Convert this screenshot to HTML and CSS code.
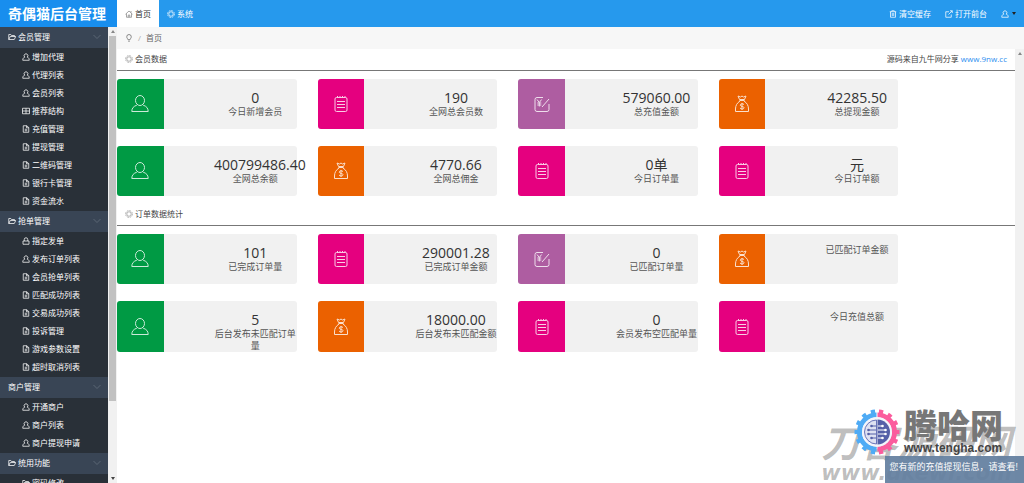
FILE: index.html
```html
<!DOCTYPE html>
<html lang="zh-CN">
<head>
<meta charset="utf-8">
<title>奇偶猫后台管理</title>
<link rel="stylesheet" href="styles.css">
</head>
<body>
<svg class="sprite" aria-hidden="true">
  <symbol id="user" viewBox="0 0 16 16"><path d="M5.500 8.300a3.800 3.800 0 1 1 5 0M5.500 8.300C3 8.800 1.500 11 1.500 14.500h13c0-3.500-1.500-5.700-4-6.200"/></symbol>
  <symbol id="folder" viewBox="0 0 16 16"><path d="M1.500 13V3h4l1.500 2h6v2M1.500 13l3-6h11l-3 6z"/></symbol>
  <symbol id="file" viewBox="0 0 16 16"><path d="M2.500 1.500h7L13.500 5v9.500h-11zM9 1.500V5.500h4.500M5.500 8.500h5M5.500 11.500h5"/></symbol>
  <symbol id="table" viewBox="0 0 16 16"><path d="M1 2.500h14v11H1zM8 2.500v11M1 8h14"/></symbol>
  <symbol id="lock" viewBox="0 0 16 16"><path d="M2 8h12v6.500H2zM4.500 8V5a3.500 3.500 0 0 1 7 0v3"/></symbol>
  <symbol id="ring" viewBox="0 0 16 16"><circle cx="8" cy="8" r="6.800" stroke-dasharray="3.500 1.800"/><circle cx="8" cy="8" r="4.500"/></symbol>
  <symbol id="home" viewBox="0 0 16 16"><path d="M1 8.500 8 2l7 6.500M3 7v7.500h10V7M6.500 14.500V10h3v4.500M12 5V2"/></symbol>
  <symbol id="pin" viewBox="0 0 16 16"><path d="M6 11.500C5.500 9 3.500 8.500 3.500 5.500a4.500 4.500 0 0 1 9 0c0 3-2 3.500-2.500 6zM6.500 14.500h3"/></symbol>
  <symbol id="trash" viewBox="0 0 16 16"><path d="M1.500 3.500h13M5.500 3.500v-2h5v2M3 3.500v11h10v-11M6.500 6v6M9.500 6v6"/></symbol>
  <symbol id="open" viewBox="0 0 16 16"><path d="M8 3.500H1.500v11h11V9M10 1.500h4.500V6M14.500 1.500 7 9"/></symbol>
  <symbol id="chevron" viewBox="0 0 16 16"><path d="m1 4 7 7 7-7"/></symbol>
  <symbol id="member" viewBox="0 0 18 18"><ellipse cx="9" cy="5.500" rx="4.500" ry="5"/><path d="M5.800 10.200C2.500 11.200.8 13.300.8 16.500h16.400c0-3.200-1.700-5.300-5-6.300"/></symbol>
  <symbol id="list" viewBox="0 0 18 18"><rect x="3" y="2.500" width="12" height="14" rx="1.500"/><path d="M5 6.500h8M5 9.500h8M5 12.500h8M5.500 1v2M8 1v2M10.500 1v2M13 1v2"/></symbol>
  <symbol id="recharge" viewBox="0 0 18 18"><path d="M10 2.500H4A2 2 0 0 0 2 4.500v10a2 2 0 0 0 2 2h10a2 2 0 0 0 2-2V9M16 4l-7 8M4 4.500l2.300 3 2.300-3M6.300 7.500v4M4.300 8h4M4.300 10h4"/></symbol>
  <symbol id="bag" viewBox="0 0 18 18"><path d="M6.500 4.500 5 1l2.500 1L9 1l1.500 1L13 1l-1.500 3.500zM6.500 5.500h5M7 6C4 8 2.500 10.500 2.500 14v2.500h13V14C15.500 10.500 14 8 11 6M11 9.500c-1-1.200-4-.8-3.700.8.3 1.500 3.700.7 3.700 2.400s-3 1.600-4 .3M9 8v7"/></symbol>
</svg>

<header class="topbar">
  <h1 class="brand">奇偶猫后台管理</h1>
  <nav class="tabs">
    <a class="tab active" href="#"><svg class="icon"><use href="#home"/></svg>首页</a>
    <a class="tab" href="#"><svg class="icon"><use href="#ring"/></svg>系统</a>
  </nav>
  <div class="tools">
    <a href="#"><svg class="icon"><use href="#trash"/></svg>清空缓存</a>
    <a href="#"><svg class="icon"><use href="#open"/></svg>打开前台</a>
    <button class="account" aria-label="账户"><svg class="icon"><use href="#user"/></svg><span class="caret"></span></button>
  </div>
</header>

<div class="body">
  <aside class="sidebar">
    <h2 class="group"><svg class="icon"><use href="#folder"/></svg>会员管理<svg class="icon fold"><use href="#chevron"/></svg></h2>
    <ul class="menu">
      <li><a href="#"><svg class="icon"><use href="#user"/></svg>增加代理</a></li>
      <li><a href="#"><svg class="icon"><use href="#user"/></svg>代理列表</a></li>
      <li><a href="#"><svg class="icon"><use href="#user"/></svg>会员列表</a></li>
      <li><a href="#"><svg class="icon"><use href="#table"/></svg>推荐结构</a></li>
      <li><a href="#"><svg class="icon"><use href="#file"/></svg>充值管理</a></li>
      <li><a href="#"><svg class="icon"><use href="#file"/></svg>提现管理</a></li>
      <li><a href="#"><svg class="icon"><use href="#file"/></svg>二维码管理</a></li>
      <li><a href="#"><svg class="icon"><use href="#file"/></svg>银行卡管理</a></li>
      <li><a href="#"><svg class="icon"><use href="#file"/></svg>资金流水</a></li>
    </ul>
    <h2 class="group"><svg class="icon"><use href="#folder"/></svg>抢单管理<svg class="icon fold"><use href="#chevron"/></svg></h2>
    <ul class="menu">
      <li><a href="#"><svg class="icon"><use href="#lock"/></svg>指定发单</a></li>
      <li><a href="#"><svg class="icon"><use href="#user"/></svg>发布订单列表</a></li>
      <li><a href="#"><svg class="icon"><use href="#file"/></svg>会员抢单列表</a></li>
      <li><a href="#"><svg class="icon"><use href="#file"/></svg>匹配成功列表</a></li>
      <li><a href="#"><svg class="icon"><use href="#file"/></svg>交易成功列表</a></li>
      <li><a href="#"><svg class="icon"><use href="#file"/></svg>投诉管理</a></li>
      <li><a href="#"><svg class="icon"><use href="#file"/></svg>游戏参数设置</a></li>
      <li><a href="#"><svg class="icon"><use href="#file"/></svg>超时取消列表</a></li>
    </ul>
    <h2 class="group">商户管理<svg class="icon fold"><use href="#chevron"/></svg></h2>
    <ul class="menu">
      <li><a href="#"><svg class="icon"><use href="#user"/></svg>开通商户</a></li>
      <li><a href="#"><svg class="icon"><use href="#user"/></svg>商户列表</a></li>
      <li><a href="#"><svg class="icon"><use href="#user"/></svg>商户提现申请</a></li>
    </ul>
    <h2 class="group"><svg class="icon"><use href="#folder"/></svg>统用功能<svg class="icon fold"><use href="#chevron"/></svg></h2>
    <ul class="menu">
      <li><a href="#"><svg class="icon"><use href="#folder"/></svg>密码修改</a></li>
    </ul>
  </aside>
  <div class="scroll"><span class="up"></span><span class="thumb"></span><span class="down"></span></div>

  <div class="page">
    <nav class="crumbs"><svg class="icon"><use href="#pin"/></svg><span class="slash">/</span><span>首页</span></nav>
    <div class="view">
      <main class="content">
        <section>
          <div class="head"><h3><svg class="icon"><use href="#ring"/></svg>会员数据</h3><p>源码来自九牛网分享 <a href="#">www.9nw.cc</a></p></div>
          <div class="cards">
            <div class="card green"><div class="badge"><svg><use href="#member"/></svg></div><div class="stat"><b>0</b><span>今日新增会员</span></div></div>
            <div class="card pink"><div class="badge"><svg><use href="#list"/></svg></div><div class="stat"><b>190</b><span>全网总会员数</span></div></div>
            <div class="card purple"><div class="badge"><svg><use href="#recharge"/></svg></div><div class="stat"><b>579060.00</b><span>总充值金额</span></div></div>
            <div class="card orange"><div class="badge"><svg><use href="#bag"/></svg></div><div class="stat"><b>42285.50</b><span>总提现金额</span></div></div>
            <div class="card green"><div class="badge"><svg><use href="#member"/></svg></div><div class="stat"><b>400799486.40</b><span>全网总余额</span></div></div>
            <div class="card orange"><div class="badge"><svg><use href="#bag"/></svg></div><div class="stat"><b>4770.66</b><span>全网总佣金</span></div></div>
            <div class="card pink"><div class="badge"><svg><use href="#list"/></svg></div><div class="stat"><b>0单</b><span>今日订单量</span></div></div>
            <div class="card pink"><div class="badge"><svg><use href="#list"/></svg></div><div class="stat"><b>元</b><span>今日订单额</span></div></div>
          </div>
        </section>
        <section>
          <div class="head"><h3><svg class="icon"><use href="#ring"/></svg>订单数据统计</h3></div>
          <div class="cards">
            <div class="card green"><div class="badge"><svg><use href="#member"/></svg></div><div class="stat"><b>101</b><span>已完成订单量</span></div></div>
            <div class="card pink"><div class="badge"><svg><use href="#list"/></svg></div><div class="stat"><b>290001.28</b><span>已完成订单金额</span></div></div>
            <div class="card purple"><div class="badge"><svg><use href="#recharge"/></svg></div><div class="stat"><b>0</b><span>已匹配订单量</span></div></div>
            <div class="card orange"><div class="badge"><svg><use href="#bag"/></svg></div><div class="stat"><span>已匹配订单金额</span></div></div>
            <div class="card green"><div class="badge"><svg><use href="#member"/></svg></div><div class="stat"><b>5</b><span>后台发布未匹配订单量</span></div></div>
            <div class="card orange"><div class="badge"><svg><use href="#bag"/></svg></div><div class="stat"><b>18000.00</b><span>后台发布未匹配金额</span></div></div>
            <div class="card pink"><div class="badge"><svg><use href="#list"/></svg></div><div class="stat"><b>0</b><span>会员发布空匹配单量</span></div></div>
            <div class="card pink"><div class="badge"><svg><use href="#list"/></svg></div><div class="stat"><span>今日充值总额</span></div></div>
          </div>
        </section>
      </main>
      <div class="scroll light"><span class="up"></span></div>
    </div>
  </div>
</div>

<div class="mark"><span class="mark-name">刀客源码网</span><span class="mark-url">www.dkewl.com</span></div>
<div class="toast" role="status">您有新的充值提现信息，请查看!</div>
<div class="logo">
  <svg class="gear" viewBox="0 0 46 46">
    <g stroke-width="4" stroke-dasharray="4.200 5.100" stroke-dashoffset="-2"><path stroke="#4fabf5" d="M23 2.500a20.500 20.500 0 0 0 0 41"/><path stroke="#fb5c9d" d="M23 2.500a20.500 20.500 0 0 1 0 41"/></g>
    <g stroke-width="5"><path stroke="#4fabf5" d="M22.500 6a17 17 0 0 0 0 34"/><path stroke="#fb5c9d" d="M23.500 6a17 17 0 0 1 0 34"/></g>
    <circle cx="23" cy="23" r="15" fill="#f4f5fb" stroke="none"/>
    <path fill="#dfe2f2" stroke="#6a74b8" d="M22.500 11a12 12 0 0 0 0 24z"/>
    <path fill="#5560a8" stroke="none" d="M23.500 10.500a12.500 12.500 0 0 1 0 25z"/>
    <path stroke="#5560a8" d="M22 17h-4M22 21h-7M22 25h-7M22 29h-4"/>
    <path stroke="#fff" d="M24 17h4M24 21h7M24 25h7M24 29h4"/>
    <g fill="#5560a8" stroke="none"><circle cx="17.500" cy="17" r="1.300"/><circle cx="14.500" cy="21" r="1.300"/><circle cx="14.500" cy="25" r="1.300"/><circle cx="17.500" cy="29" r="1.300"/></g>
    <g fill="#fff" stroke="none"><circle cx="28.500" cy="17" r="1.300"/><circle cx="31.500" cy="21" r="1.300"/><circle cx="31.500" cy="25" r="1.300"/><circle cx="28.500" cy="29" r="1.300"/></g>
  </svg>
  <div class="logo-text"><span class="logo-name">腾哈网</span><span class="logo-url">www.tengha.com</span></div>
</div>
</body>
</html>
```

FILE: styles.css
```css
* { box-sizing: border-box; margin: 0; padding: 0; }
body {
  display: flex; flex-direction: column; height: 100vh; overflow: hidden; position: relative;
  font: 8px/12px "Open Sans", "Noto Sans CJK SC", sans-serif; color: #444; background: #fff;
}
a { color: inherit; text-decoration: none; }
ul { list-style: none; }
.sprite { position: absolute; width: 0; height: 0; }
svg { fill: none; stroke: currentColor; stroke-width: 1; }
.icon { width: 8px; height: 8px; flex: none; stroke-width: 1.5; }

.topbar { display: flex; height: 27px; flex: none; background: #2699ed; color: #fff; }
.brand { width: 117px; padding-left: 8px; background: #188eee; font-size: 14px; line-height: 27px; white-space: nowrap; }
.tabs { display: flex; }
.tab { display: flex; align-items: center; gap: 2px; padding: 0 8px; }
.tab.active { background: #fff; color: #333; }
.tab.active .icon { color: #888; }
.tools { display: flex; align-items: center; gap: 14px; margin-left: auto; padding-right: 8px; }
.tools a { display: flex; align-items: center; gap: 2px; }
.account { display: flex; align-items: center; gap: 3px; border: 0; background: none; color: #fff; }
.caret { border: 2px solid transparent; border-top: 3px solid #222; border-bottom: 0; }

.body { display: flex; flex: 1; min-height: 0; }
.sidebar { width: 108px; flex: none; overflow: hidden; background: #293038; color: #fff; }
.group { display: flex; align-items: center; gap: 2px; height: 21px; padding: 0 7px 2px 8px; background: #394555; font-size: 8px; font-weight: 400; }
.fold { margin-left: auto; color: #66727f; }
.menu { padding-bottom: 1px; }
.menu a { display: flex; align-items: center; gap: 2px; height: 18px; padding-left: 22px; }

.scroll { display: flex; flex-direction: column; align-items: center; width: 9px; flex: none; padding: 3px 0; background: #f1f1f1; }
.thumb { width: 7px; height: 81%; margin-top: 3px; background: #c1c1c1; }
.up { border: 2px solid transparent; border-bottom: 3px solid #888; border-top: 0; }
.down { margin-top: auto; border: 2px solid transparent; border-top: 3px solid #444; border-bottom: 0; }

.page { display: flex; flex-direction: column; flex: 1; min-width: 0; }
.crumbs { display: flex; align-items: center; gap: 5px; height: 22px; padding-left: 8px; background: #f7f7f7; color: #666; }
.slash { color: #aaa; }
.view { display: flex; flex: 1; min-height: 0; }
.content { flex: 1; min-width: 0; overflow: hidden; }
.head { display: flex; align-items: center; justify-content: space-between; height: 22px; padding: 0 8px 2px; border-bottom: 1px solid #777; }
.head h3 { display: flex; align-items: center; gap: 2px; font-size: 8px; font-weight: 400; }
.head .icon { color: #999; }
.head p a { color: #2e8ff0; }
.cards { display: grid; grid-template-columns: repeat(4, 20%); gap: 17px 21px; padding: 8px 0; }
.card { display: flex; min-height: 50px; border-radius: 3px; background: #f1f1f1; }
.badge { display: flex; align-items: center; justify-content: center; width: 26%; border-radius: 3px 0 0 3px; color: #fff; }
.badge svg { width: 18px; height: 18px; opacity: .8; }
.green .badge { background: #009a44; }
.pink .badge { background: #e5007f; }
.purple .badge { background: #ae5da1; }
.orange .badge { background: #eb6100; }
.stat { display: flex; flex-direction: column; width: 46%; margin-left: auto; padding-top: 10px; text-align: center; }
.stat b { font-size: 14px; font-weight: 400; line-height: 17px; white-space: nowrap; color: #333; }
.stat span { font-size: 9px; line-height: 12px; color: #555; }

.toast { position: absolute; right: 0; bottom: 0; padding: 3px 6px 8px 5px; background: #647fa0ee; color: #fff; font-size: 9px; line-height: 16px; white-space: nowrap; }
.mark { position: absolute; right: 12px; bottom: 0; display: flex; flex-direction: column; color: #0004; font-weight: 700; font-style: italic; white-space: nowrap; }
.mark-name { font-size: 38px; line-height: 42px; }
.mark-url { font: italic 700 21px/20px "DejaVu Sans", sans-serif; }
.logo { position: absolute; right: 21px; bottom: 28px; display: flex; align-items: center; gap: 4px; }
.gear { width: 46px; height: 46px; }
.logo-text { display: flex; flex-direction: column; white-space: nowrap; }
.logo-name { font-size: 33px; font-weight: 900; line-height: 32px; color: #777; }
.logo-url { font: 700 12px/12px "Liberation Sans", sans-serif; color: #444; }
```
